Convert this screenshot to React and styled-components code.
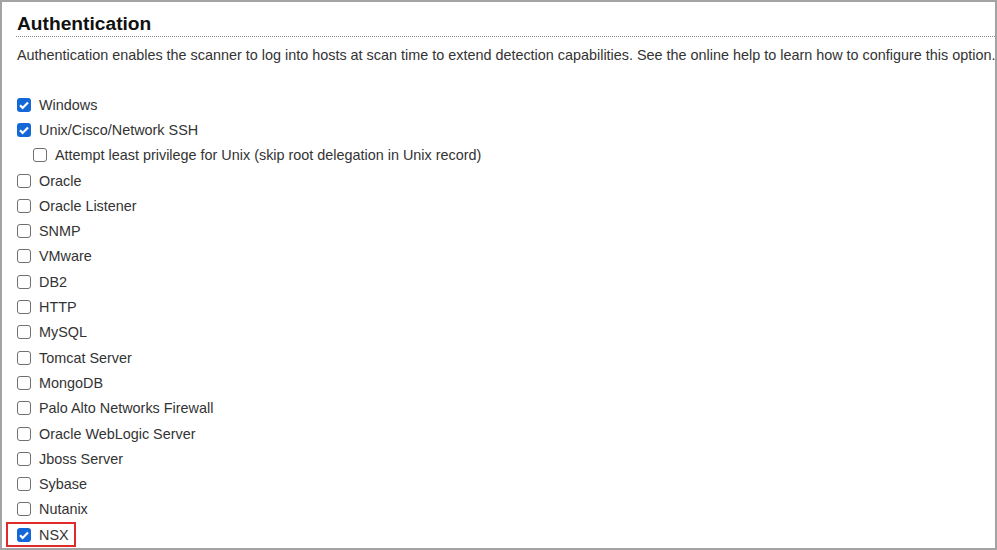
import styled, { createGlobalStyle } from "styled-components";

const GlobalStyle = createGlobalStyle`
    html, body {
        margin: 0;
        padding: 0;
        background: #ffffff;
    }
    body {
        font-family: "Liberation Sans", Arial, sans-serif;
    }
`;

const Frame = styled.div`
    width: 997px;
    height: 550px;
    box-sizing: border-box;
    border: 2px solid #a3a3a3;
    overflow: hidden;
    background: #fff;
`;

const Content = styled.div`
    padding: 9px 0 0 15px;
    width: 1100px;
`;

const Heading = styled.h2`
    margin: 0 0 0 -1px;
    padding: 1px 0 1px 1px;
    font-size: 19.2px;
    line-height: 23px;
    font-weight: bold;
    color: #111;
    border-bottom: 1px dotted #8a8a8a;
`;

const Description = styled.p`
    margin: 10px 0 29px;
    font-size: 14.4px;
    line-height: 16px;
    color: #333;
    white-space: nowrap;
`;

const List = styled.div`
    display: flex;
    flex-direction: column;
`;

const Row = styled.div`
    display: flex;
    align-items: center;
    height: 25.3px;
    padding-left: ${(p) => (p.$indent ? "16px" : "0")};
`;

const Option = styled.label`
    display: inline-flex;
    align-items: center;
    height: 100%;
    box-sizing: border-box;
    font-size: 14.4px;
    color: #333;
    cursor: pointer;
    ${(p) =>
        p.$highlight &&
        `
        border: 2px solid #e02b2b;
        margin-left: -11px;
        padding: 0 5px 0 9px;
    `}
`;

const Box = styled.input.attrs({ type: "checkbox" })`
    appearance: none;
    -webkit-appearance: none;
    box-sizing: border-box;
    width: 14px;
    height: 14px;
    margin: 0 8px 0 0;
    border: 1.5px solid #6f6f6f;
    border-radius: 3px;
    background: #fff;
    flex-shrink: 0;
    &:checked {
        border: none;
        background: #1467d6
            url("data:image/svg+xml;utf8,<svg xmlns='http://www.w3.org/2000/svg' viewBox='0 0 14 14'><path d='M3 7.3l2.6 2.6L11 4.4' fill='none' stroke='white' stroke-width='2.2'/></svg>")
            center / 14px 14px no-repeat;
    }
`;

const options = [
    { label: "Windows", checked: true },
    { label: "Unix/Cisco/Network SSH", checked: true },
    { label: "Attempt least privilege for Unix (skip root delegation in Unix record)", indent: true },
    { label: "Oracle" },
    { label: "Oracle Listener" },
    { label: "SNMP" },
    { label: "VMware" },
    { label: "DB2" },
    { label: "HTTP" },
    { label: "MySQL" },
    { label: "Tomcat Server" },
    { label: "MongoDB" },
    { label: "Palo Alto Networks Firewall" },
    { label: "Oracle WebLogic Server" },
    { label: "Jboss Server" },
    { label: "Sybase" },
    { label: "Nutanix" },
    { label: "NSX", checked: true, highlight: true },
];

const App = () => {
    return (
        <>
            <GlobalStyle />
            <Frame>
                <Content>
                    <Heading>Authentication</Heading>
                    <Description>
                        Authentication enables the scanner to log into hosts at scan time to extend detection
                        capabilities. See the online help to learn how to configure this option.
                    </Description>
                    <List>
                        {options.map((o) => (
                            <Row key={o.label} $indent={o.indent}>
                                <Option $highlight={o.highlight}>
                                    <Box defaultChecked={o.checked} />
                                    {o.label}
                                </Option>
                            </Row>
                        ))}
                    </List>
                </Content>
            </Frame>
        </>
    );
};

export default App;
